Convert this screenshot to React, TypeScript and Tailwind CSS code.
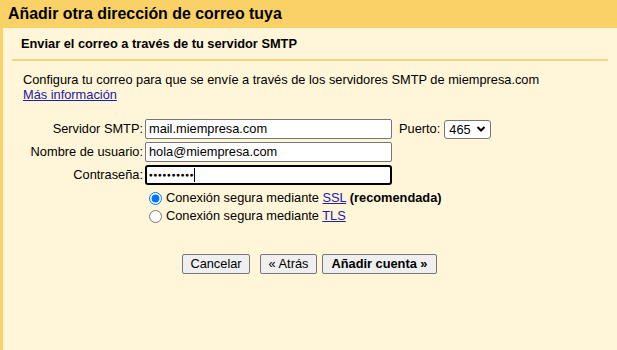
import React from "react";

export default function App() {
  return (
    <div className="w-[617px] h-[350px] overflow-hidden bg-[#fff5d8] text-[12.8px] text-black font-['Liberation_Sans',Arial,sans-serif]">
      {/* header bar */}
      <div className="h-[28px] bg-[#f9d167] pl-[8px] text-[15.9px] font-bold leading-[28px]">
        Añadir otra dirección de correo tuya
      </div>

      <div className="h-[322px] border-l-[3px] border-[#f9d167]">
        <div className="pl-[18px] pt-[8px] font-bold leading-[16px]">
          Enviar el correo a través de tu servidor SMTP
        </div>
        <div className="ml-[9px] mt-[7px] h-[2px] w-[596px] bg-[#f6d57f]"></div>

        <div className="pl-[20px] pt-[11px] leading-[15px]">
          <div>Configura tu correo para que se envíe a través de los servidores SMTP de miempresa.com</div>
          <a href="#" className="text-[#2020a8] underline">Más información</a>
        </div>

        {/* form */}
        <div className="mt-[17px] ml-[22px] flex flex-col gap-[3px]">
          <div className="flex items-center h-[20px]">
            <label className="w-[120px] text-right pr-[2px]">Servidor SMTP:</label>
            <div className="w-[247px] h-[20px] border border-[#767676] rounded-[2px] bg-white px-[3px] leading-[18px]">
              mail.miempresa.com
            </div>
            <span className="ml-[7px]">Puerto:</span>
            <div className="ml-[4px] w-[47px] h-[19px] border border-[#767676] rounded-[3px] bg-white flex items-center pl-[4px] gap-[5px]">
              <span className="leading-[17px]">465</span>
              <svg width="10" height="8" viewBox="0 0 10 8">
                <path d="M1.5 2 L5 5.5 L8.5 2" fill="none" stroke="#000" strokeWidth="2" />
              </svg>
            </div>
          </div>
          <div className="flex items-center h-[20px]">
            <label className="w-[120px] text-right pr-[2px]">Nombre de usuario:</label>
            <div className="w-[247px] h-[20px] border border-[#767676] rounded-[2px] bg-white px-[3px] leading-[18px]">
              hola@miempresa.com
            </div>
          </div>
          <div className="flex items-center h-[20px]">
            <label className="w-[120px] text-right pr-[2px]">Contraseña:</label>
            <div className="w-[247px] h-[20px] border-2 border-black rounded-[3px] bg-white px-[2px] flex items-center">
              <span className="text-[6.5px] leading-[8px] tracking-[0.6px]">●●●●●●●●●●</span>
              <span className="w-[1px] h-[14px] bg-black"></span>
            </div>
          </div>

          <div className="ml-[124px] mt-[1px] flex flex-col">
            <label className="flex items-center h-[18px] gap-[4px]">
              <input type="radio" name="sec" defaultChecked className="w-[13px] h-[13px] m-0 accent-[#0075ff]" />
              <span>
                Conexión segura mediante <a href="#" className="text-[#2020a8] underline">SSL</a>{" "}
                <b>(recomendada)</b>
              </span>
            </label>
            <label className="flex items-center h-[18px] gap-[4px]">
              <input type="radio" name="sec" className="w-[13px] h-[13px] m-0" />
              <span>
                Conexión segura mediante <a href="#" className="text-[#2020a8] underline">TLS</a>
              </span>
            </label>
          </div>
        </div>

        {/* buttons */}
        <div className="mt-[29px] ml-[179px] flex items-center">
          <button className="h-[20px] w-[68px] border border-[#767676] rounded-[2px] bg-[#efefef] leading-[18px]">
            Cancelar
          </button>
          <button className="ml-[10px] h-[20px] w-[57px] border border-[#767676] rounded-[2px] bg-[#efefef] leading-[18px]">
            « Atrás
          </button>
          <button className="ml-[5px] h-[20px] w-[115px] border border-[#767676] rounded-[2px] bg-[#efefef] leading-[18px] font-bold">
            Añadir cuenta »
          </button>
        </div>
      </div>
    </div>
  );
}
